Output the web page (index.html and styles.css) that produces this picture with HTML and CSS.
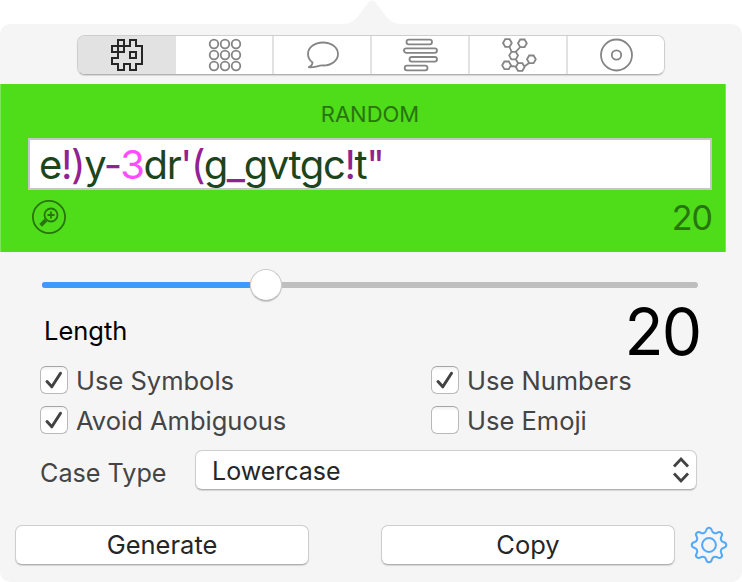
FILE: index.html
```html
<!DOCTYPE html>
<html lang="en">
<head>
<meta charset="utf-8">
<title>Password Generator</title>
<link rel="stylesheet" href="styles.css">
</head>
<body>
<svg class="arrow" viewBox="0 0 60 24"><path d="M0 24C10 24 14 19 18 13.500L26 3Q30-2 34 3L42 13.500C46 19 50 24 60 24Z"/></svg>
<main class="popover">
  <nav class="tabs">
    <button class="tab selected"><svg viewBox="0 0 36 36" stroke-width="2"><path d="M9 3h6v6h6V3h6v6h6v18h-6v6h-6v-6h-6v6H9v-6H3v-6h6v-6H3V9h6zM9 9h6v6H9zM21 15h6v6h-6z"/></svg></button>
    <button class="tab"><svg viewBox="0 0 36 36"><circle cx="7" cy="7" r="4.300"/><circle cx="18" cy="7" r="4.300"/><circle cx="29" cy="7" r="4.300"/><circle cx="7" cy="18" r="4.300"/><circle cx="18" cy="18" r="4.300"/><circle cx="29" cy="18" r="4.300"/><circle cx="7" cy="29" r="4.300"/><circle cx="18" cy="29" r="4.300"/><circle cx="29" cy="29" r="4.300"/></svg></button>
    <button class="tab"><svg viewBox="0 0 36 36"><path d="M8.500 25.500C5.500 23.300 4 20.300 4 17 4 10.500 10.500 5.500 19 5.500S34 10.500 34 17 27.500 28.500 19 28.500C14.500 28 11 31 4.300 30.200 6.500 29.500 8.500 27.500 8.500 25.500Z"/></svg></button>
    <button class="tab"><svg viewBox="0 0 36 36"><rect x="4.500" y="2.700" width="25.500" height="4.600" rx="2.300"/><rect x="2" y="11.300" width="33" height="4.600" rx="2.300"/><rect x="7.500" y="20" width="27.500" height="4.600" rx="2.300"/><rect x="2.700" y="28.700" width="22.800" height="4.600" rx="2.300"/></svg></button>
    <button class="tab"><svg viewBox="0 0 36 36"><path d="M3 6l2.200-3.800h4.400L11.800 6 9.600 9.800H5.200zM18 6.300l2.200-3.800h4.400l2.200 3.800-2.200 3.800h-4.400zM9.200 18.600l2.200-3.800h4.400l2.200 3.800-2.200 3.800h-4.400zM27 22.300l2.200-3.800h4.400l2.200 3.800-2.200 3.800h-4.400zM2.200 28.300l2.200-3.800h4.400l2.200 3.800-2.200 3.800H4.400zM15.800 30l2.200-3.800h4.400l2.200 3.800-2.200 3.800H18zM9.500 10l2 4.500M20.300 10l-4.600 4.800M15.700 22.300l2.500 4M11 29l5 .7M24.300 29.500l5.200-3.800"/></svg></button>
    <button class="tab"><svg viewBox="0 0 36 36"><circle cx="18.500" cy="18" r="15.500"/><circle cx="18.500" cy="18" r="4.700"/></svg></button>
  </nav>

  <section class="result">
    <h1 class="mode"><span>RANDOM</span></h1>
    <div class="password"><span class="password-text">e<i>!)</i>y<i>-</i><b>3</b>dr<i>'(</i>g<i>_</i>gvtgc<i>!</i>t<i>"</i></span></div>
    <div class="result-foot">
      <svg class="magnify" viewBox="0 0 34 34"><circle cx="17" cy="17" r="16.100"/><circle cx="19" cy="15" r="6.500"/><path d="M15.500 15h7M19 11.500v7"/><path class="handle" d="M13.800 20.200L8.700 25.300"/></svg>
      <span class="count">20</span>
    </div>
  </section>

  <section class="options">
    <div class="slider"><div class="fill"></div><div class="knob"></div></div>
    <div class="length"><span class="length-label">Length</span><span class="length-value">20</span></div>
    <div class="checks">
      <label class="check"><span class="box"><svg viewBox="0 0 28 28"><path d="M7 15.500l4.800 5.300L20.500 7.300"/></svg></span><span class="check-text">Use Symbols</span></label>
      <label class="check"><span class="box"><svg viewBox="0 0 28 28"><path d="M7 15.500l4.800 5.300L20.500 7.300"/></svg></span><span class="check-text">Use Numbers</span></label>
      <label class="check"><span class="box"><svg viewBox="0 0 28 28"><path d="M7 15.500l4.800 5.300L20.500 7.300"/></svg></span><span class="check-text">Avoid Ambiguous</span></label>
      <label class="check"><span class="box"></span><span class="check-text">Use Emoji</span></label>
    </div>
    <div class="case">
      <span class="case-label">Case Type</span>
      <div class="select"><span class="select-value">Lowercase</span><svg viewBox="0 0 18 28"><path d="M2 10.500l7-7.500 7 7.500M2 17.500l7 7.500 7-7.500"/></svg></div>
    </div>
  </section>

  <footer class="actions">
    <button class="button">Generate</button>
    <button class="button">Copy</button>
    <svg class="gear" viewBox="-20 -20 40 40"><circle r="6.900"/><path d="M-3-14.200C-2.400-16.500-2-17.300 0-17.300S2.400-16.500 3-14.200C3.600-12.100 6.200-11.100 8-12.200 10-13.500 11-13.600 12.200-12.200 13.600-11 13.500-10 12.200-8 11.100-6.200 12.100-3.600 14.200-3 16.500-2.400 17.300-2 17.300 0S16.500 2.400 14.200 3C12.100 3.600 11.100 6.200 12.200 8 13.500 10 13.600 11 12.200 12.200 11 13.600 10 13.500 8 12.200 6.200 11.100 3.600 12.100 3 14.200 2.400 16.500 2 17.300 0 17.300S-2.400 16.500-3 14.200C-3.600 12.100-6.200 11.100-8 12.200-10 13.500-11 13.600-12.200 12.200-13.600 11-13.500 10-12.200 8-11.100 6.200-12.100 3.600-14.200 3-16.500 2.400-17.300 2-17.300 0S-16.500-2.400-14.200-3C-12.100-3.600-11.100-6.200-12.200-8-13.500-10-13.600-11-12.200-12.200-11-13.600-10-13.500-8-12.200-6.200-11.100-3.600-12.100-3-14.200Z"/></svg>
  </footer>
</main>
</body>
</html>
```
FILE: styles.css
```css
* { box-sizing: border-box; }
body {
  margin: 0;
  width: 742px;
  height: 582px;
  overflow: hidden;
  background: #fff;
  font: 400 25.5px/30px Inter, "Liberation Sans", sans-serif;
  color: #262626;
}
svg { display: block; fill: none; overflow: visible; }
button { font: inherit; color: inherit; padding: 0; border: 0; }
span { white-space: nowrap; }

.arrow { width: 60px; height: 24px; margin-left: 342px; fill: #f5f5f5; overflow: hidden; }
.popover {
  height: 558px;
  padding-top: 11px;
  background: #f5f5f5;
  border-radius: 10px;
}

.tabs {
  display: grid;
  grid-template-columns: 98px 96px 98px 98px 98px 98px;
  width: 588px;
  height: 40px;
  margin-left: 77px;
  border: 1px solid #cecece;
  border-bottom-color: #b1b1b1;
  border-radius: 8px;
  box-shadow: 0 1px 1px #d5d5d5;
  overflow: hidden;
}
.tab {
  display: flex;
  align-items: center;
  justify-content: center;
  background: #fff;
  border-left: 2px solid #e2e2e2;
  stroke: #858585;
  stroke-width: 1.8;
}
.tab:first-child, .tab:nth-child(2) { border-left: 0; }
.tab:nth-child(2) { padding-left: 2px; }
.tab.selected { background: #e2e2e2; stroke: #262626; }
.tab svg { width: 36px; height: 36px; }

.result {
  width: 726px;
  height: 168px;
  margin-top: 9px;
  padding: 15px 13px 0 27px;
  background: #4fdc19;
  border: solid #80e45b;
  border-width: 0 1px;
  color: #28740f;
}
.mode { margin: 0; text-align: center; font-size: 22px; font-weight: 400; line-height: 30px; }
.password {
  height: 52px;
  margin-top: 9px;
  padding-left: 9px;
  background: #fff;
  border: 2px solid #c6c6c6;
  color: #1d451c;
  font-size: 40px;
  line-height: 49px;
  letter-spacing: -1.4px;
}
.password i { font-style: normal; color: #932191; }
.password b { font-weight: inherit; color: #ff4cff; }
.result-foot { display: flex; justify-content: space-between; margin-top: 10px; padding-left: 4px; }
.magnify { width: 34px; height: 34px; stroke: #28740f; stroke-width: 1.8; }
.handle { stroke-width: 4; }
.count { font-size: 34px; line-height: 36px; letter-spacing: -1px; }

.options { padding: 0 45px 0 40px; }
.slider {
  position: relative;
  height: 6px;
  margin: 30px -1px 0 2px;
  border-radius: 3px;
  background: #bebebe;
}
.fill { width: 34%; height: 6px; border-radius: 3px; background: #3d99fb; }
.knob {
  position: absolute;
  left: 208px;
  top: -13px;
  width: 32px;
  height: 32px;
  border: 1px solid #cbcbcb;
  border-bottom-color: #b5b5b5;
  border-radius: 50%;
  background: #fff;
  box-shadow: 0 1px 1px #ccc;
}
.length { display: flex; justify-content: space-between; height: 78px; padding-left: 4px; color: #000; }
.length-label { margin-top: 28px; }
.length-value { margin: 4px -3px 0 0; font-size: 64px; line-height: 80px; letter-spacing: -2px; }
.checks { display: grid; grid-template-columns: 391px 1fr; row-gap: 12px; color: #444; }
.check { display: flex; align-items: center; height: 28px; gap: 8px; }
.check-text { padding-top: 2px; }
.box {
  width: 28px;
  height: 28px;
  border: 1px solid #b9b9b9;
  border-top-color: #a5a5a5;
  border-radius: 6px;
  background: linear-gradient(#f0f0f0, #fff 4px);
}
.box svg { width: 28px; height: 28px; margin: -1px; stroke: #424242; stroke-width: 3; stroke-linecap: round; stroke-linejoin: round; }
.case { display: flex; height: 40px; margin-top: 16px; color: #444; }
.case-label { width: 155px; margin-top: 8px; font-size: 25.2px; }
.select, .button {
  height: 40px;
  background: #fff;
  border: 1px solid #cecece;
  border-bottom-color: #b1b1b1;
  border-radius: 7px;
  box-shadow: 0 1px 1px #d5d5d5;
}
.select { display: flex; flex: 1; align-items: center; justify-content: space-between; padding: 0 6px 0 16px; color: #262626; }
.select-value { font-size: 25px; padding-top: 2px; }
.select svg { width: 18px; height: 28px; stroke: #424242; stroke-width: 2.8; }

.actions { display: flex; margin: 35px 0 0 15px; }
.button { width: 294px; }
.button + .button { margin-left: 72px; }
.gear { width: 40px; height: 40px; margin-left: 14px; stroke: #52a9fa; stroke-width: 2; }
```
